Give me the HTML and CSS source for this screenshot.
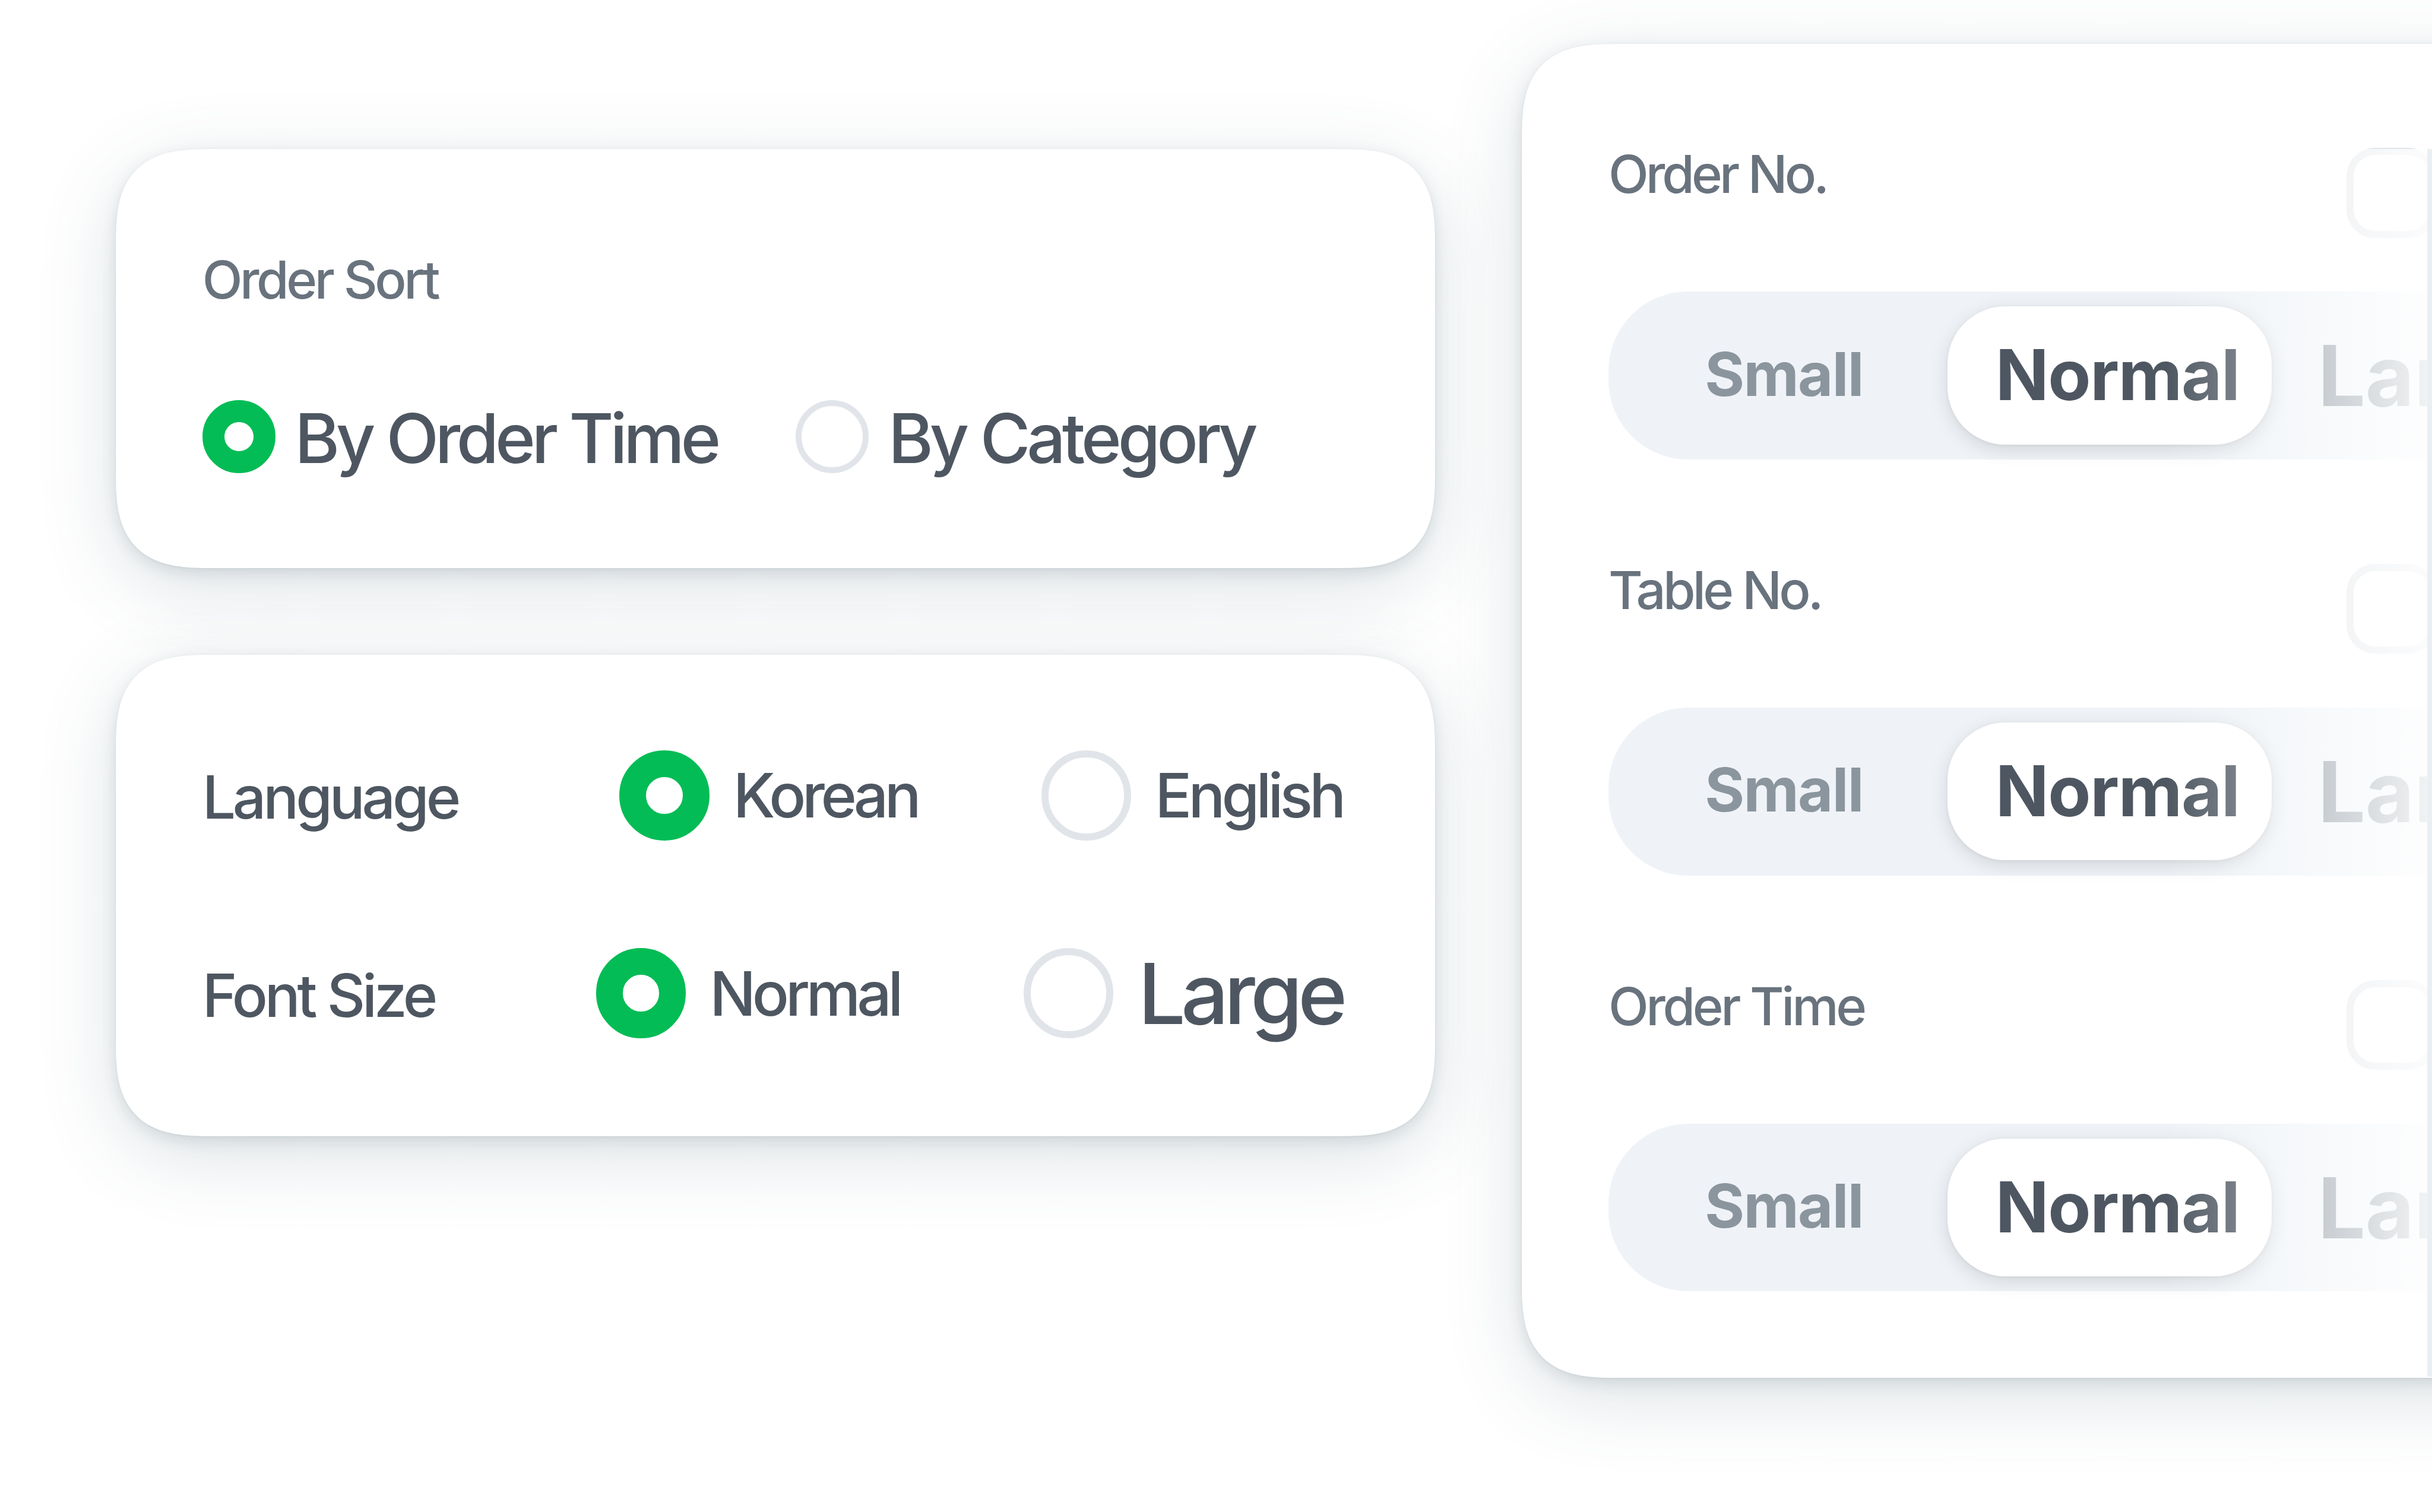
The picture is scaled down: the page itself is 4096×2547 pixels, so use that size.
FILE: index.html
```
<!DOCTYPE html>
<html lang="en">

<head>
    <meta charset="UTF-8">
    <meta name="viewport" content="width=device-width, initial-scale=1.0">
    <title>Settings</title>
    <link rel="stylesheet" href="styles.css">
</head>

<body>
    <div class="page">
        <div class="left">
            <div class="card sort">
                <h2 class="label">Order Sort</h2>
                <div class="sort_options">
                    <label class="option"><i class="radio on"></i><span class="t_time">By Order Time</span></label>
                    <label class="option"><i class="radio"></i><span>By Category</span></label>
                </div>
            </div>
            <div class="card display">
                <div class="row">
                    <span class="name">Language</span>
                    <label class="option"><i class="radio on"></i><span class="t_kor">Korean</span></label>
                    <label class="option"><i class="radio"></i><span class="t_eng">English</span></label>
                </div>
                <div class="row">
                    <span class="name">Font Size</span>
                    <label class="option"><i class="radio on"></i><span class="t_nor">Normal</span></label>
                    <label class="option"><i class="radio"></i><span class="big">Large</span></label>
                </div>
            </div>
        </div>
        <div class="card sizes">
            <div class="item">
                <div class="item_head"><span class="label t_no">Order No.</span><i class="check"></i></div>
                <div class="segment">
                    <span class="small">Small</span>
                    <span class="normal">Normal</span>
                    <span class="large">Large</span>
                </div>
            </div>
            <div class="item">
                <div class="item_head"><span class="label t_table">Table No.</span><i class="check"></i></div>
                <div class="segment">
                    <span class="small">Small</span>
                    <span class="normal">Normal</span>
                    <span class="large">Large</span>
                </div>
            </div>
            <div class="item">
                <div class="item_head"><span class="label">Order Time</span><i class="check"></i></div>
                <div class="segment">
                    <span class="small">Small</span>
                    <span class="normal">Normal</span>
                    <span class="large">Large</span>
                </div>
            </div>
            <div class="fade"></div>
        </div>
    </div>
</body>

</html>
```
FILE: styles.css
```
/* 1rem = 1/505 of the window width */
html {
    font-size: calc(100vw / 505);
}

* {
    box-sizing: border-box;
}

body {
    margin: 0;
    background: #fff;
    color: #4e5761;
    font-family: Inter, "Liberation Sans", sans-serif;
    font-weight: 500;
    overflow: hidden;
}

.page {
    display: flex;
    gap: 18rem;
    width: 505rem;
    height: 314rem;
    padding-left: 24rem;
    overflow: hidden;
}

.left {
    flex: none;
    display: flex;
    flex-direction: column;
    gap: 18rem;
    width: 274rem;
    padding-top: 31rem;
}

.card {
    background: #fff;
    border-radius: 14.5rem;
    box-shadow: 0 0.1rem 0.4rem rgba(70, 95, 110, 0.1), 0 1rem 3rem rgba(70, 95, 110, 0.15), 0 4rem 16rem rgba(70, 95, 110, 0.19);
}

/* smoothed corners where available */
@supports (corner-shape: superellipse(1.5)) {
    .card {
        border-radius: 20rem;
        corner-shape: superellipse(1.52);
    }
}

.label {
    margin: 0;
    color: #69737e;
    font-size: 10.9rem;
    font-weight: 500;
    line-height: 13.8rem;
    letter-spacing: -0.05em;
    white-space: nowrap;
}

.option {
    display: flex;
    align-items: center;
    gap: 4.9rem;
    white-space: nowrap;
}

.radio {
    flex: none;
    border: 1.49rem solid #e1e5ea;
    border-radius: 50%;
    width: 18.7rem;
    height: 18.7rem;
}

.radio.on {
    border: 5.6rem solid #03bc55;
}

.sort {
    height: 87rem;
    padding: 20.2rem 18rem 0;
}

.sort_options {
    display: flex;
    gap: 16.3rem;
    margin-top: 16.8rem;
    font-size: 14.25rem;
    letter-spacing: -0.053em;
}

.sort .option {
    gap: 4rem;
}

.sort .option span {
    padding-top: 0.5rem;
}

.sort .radio {
    width: 15.2rem;
    height: 15.2rem;
    border-width: 1.24rem;
}

.sort .radio.on {
    border-width: 4.57rem;
}

.sort .t_time {
    letter-spacing: -0.055em;
}

.display {
    height: 100rem;
    padding: 19.85rem 19.2rem 0 18rem;
}

.row {
    display: flex;
    align-items: center;
    height: 18.7rem;
    margin-bottom: 22.4rem;
    font-size: 12.7rem;
}

.row .name {
    flex: 1;
    padding-top: 0.7rem;
    font-size: 12.3rem;
    letter-spacing: -0.052em;
    white-space: nowrap;
}

.row .option {
    margin-left: 25.7rem;
}

.t_kor {
    letter-spacing: -0.062em;
}

.t_eng {
    letter-spacing: -0.057em;
}

.t_nor {
    letter-spacing: -0.06em;
}

.row .big {
    margin-left: 0.2rem;
    font-size: 17.5rem;
    letter-spacing: -0.056em;
}

/* runs past the right edge of the window */
.sizes {
    position: relative;
    flex: none;
    width: 230rem;
    height: 277.1rem;
    margin-top: 9.07rem;
    padding: 21.63rem 40rem 0 18rem;
}

.item {
    height: 86.4rem;
}

.item_head {
    display: flex;
    height: 29.85rem;
}

.item_head .label {
    line-height: 10.8rem;
}

.item_head .t_no {
    letter-spacing: -0.056em;
}

.item_head .t_table {
    letter-spacing: -0.054em;
}

.check {
    flex: none;
    width: 18.7rem;
    height: 18.7rem;
    margin-left: auto;
    border: 1.49rem solid #e1e5ea;
    border-radius: 6rem;
}

.segment {
    display: flex;
    align-items: center;
    height: 34.85rem;
    margin-right: -30rem;
    border-radius: 16.5rem;
    background: #eff3f7;
    color: #8b959e;
    font-weight: 700;
    letter-spacing: -0.015em;
}

.small {
    flex: none;
    width: 50.4rem;
    margin-left: 20rem;
    padding-bottom: 0.7rem;
    font-size: 12.6rem;
    letter-spacing: -0.016em;
}

.normal {
    flex: none;
    border-radius: 12rem;
    width: 67.3rem;
    height: 28.65rem;
    padding-left: 9.95rem;
    line-height: 28.6rem;
    font-size: 14.55rem;
    letter-spacing: -0.012em;
    background: #fff;
    color: #4e5761;
    box-shadow: 0 0.2rem 0.8rem rgba(0, 0, 0, 0.05), 0 1rem 4rem rgba(0, 0, 0, 0.12);
}

.large {
    flex: none;
    margin-left: 9.6rem;
    font-size: 17.5rem;
}

/* right edge fade and divider over the card */
.fade {
    position: absolute;
    left: 133.5rem;
    top: 21.93rem;
    width: 56rem;
    height: 254.9rem;
    background: linear-gradient(to right, rgba(255, 255, 255, 0), rgba(255, 255, 255, 0.88) 54.5rem, #eaeff3 54.5rem);
}
```
